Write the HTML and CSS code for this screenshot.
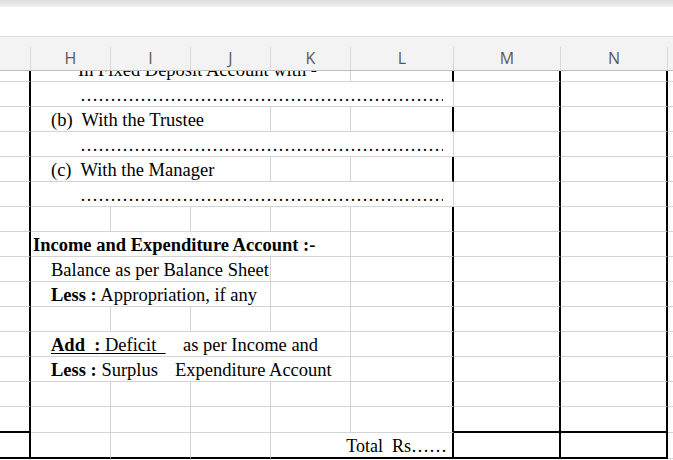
FILE: index.html
```html
<!DOCTYPE html>
<html lang="en">

<head>
    <meta charset="UTF-8">
    <meta name="viewport" content="width=device-width, initial-scale=1.0">
    <title>Receipts and Payments</title>
    <link rel="stylesheet" href="styles.css">
</head>

<body>
    <!-- Toolbar + formula bar -->
    <div class="topbar"></div>
    <div class="formula"></div>

    <!-- Column headers -->
    <div class="colhead">
        <div class="hd c-stub"></div>
        <div class="hd c-col">H</div>
        <div class="hd c-col">I</div>
        <div class="hd c-col">J</div>
        <div class="hd c-col">K</div>
        <div class="hd c-l">L</div>
        <div class="hd c-m">M</div>
        <div class="hd c-n">N</div>
        <div class="hd c-o"></div>
    </div>

    <!-- Sheet -->
    <div class="sheet">
        <div class="rows">
            <div class="row">
                <div class="cell c-stub"></div>
                <div class="cell span-4 ind-c">In Fixed Deposit Account with <b>-</b></div>
                <div class="cell c-l"></div>
                <div class="cell c-m"></div>
                <div class="cell c-n"></div>
                <div class="cell c-o"></div>
            </div>
            <div class="row">
                <div class="cell c-stub"></div>
                <div class="cell span-5 ind-d"><div class="dots">……………………………………………………………………………………</div></div>
                <div class="cell c-m"></div>
                <div class="cell c-n"></div>
                <div class="cell c-o"></div>
            </div>
            <div class="row">
                <div class="cell c-stub"></div>
                <div class="cell span-3 ind-b">(b)&nbsp; With the Trustee</div>
                <div class="cell c-col"></div>
                <div class="cell c-l"></div>
                <div class="cell c-m"></div>
                <div class="cell c-n"></div>
                <div class="cell c-o"></div>
            </div>
            <div class="row">
                <div class="cell c-stub"></div>
                <div class="cell span-5 ind-d"><div class="dots">……………………………………………………………………………………</div></div>
                <div class="cell c-m"></div>
                <div class="cell c-n"></div>
                <div class="cell c-o"></div>
            </div>
            <div class="row">
                <div class="cell c-stub"></div>
                <div class="cell span-3 ind-b">(c)&nbsp; With the Manager</div>
                <div class="cell c-col"></div>
                <div class="cell c-l"></div>
                <div class="cell c-m"></div>
                <div class="cell c-n"></div>
                <div class="cell c-o"></div>
            </div>
            <div class="row">
                <div class="cell c-stub"></div>
                <div class="cell span-5 ind-d"><div class="dots">……………………………………………………………………………………</div></div>
                <div class="cell c-m"></div>
                <div class="cell c-n"></div>
                <div class="cell c-o"></div>
            </div>
            <div class="row">
                <div class="cell c-stub"></div>
                <div class="cell c-col"></div>
                <div class="cell c-col"></div>
                <div class="cell c-col"></div>
                <div class="cell c-col"></div>
                <div class="cell c-l"></div>
                <div class="cell c-m"></div>
                <div class="cell c-n"></div>
                <div class="cell c-o"></div>
            </div>
            <div class="row">
                <div class="cell c-stub"></div>
                <div class="cell span-4 ind-a"><b>Income and Expenditure Account :-</b></div>
                <div class="cell c-l"></div>
                <div class="cell c-m"></div>
                <div class="cell c-n"></div>
                <div class="cell c-o"></div>
            </div>
            <div class="row">
                <div class="cell c-stub"></div>
                <div class="cell span-3 ind-b">Balance as per Balance Sheet</div>
                <div class="cell c-col"></div>
                <div class="cell c-l"></div>
                <div class="cell c-m"></div>
                <div class="cell c-n"></div>
                <div class="cell c-o"></div>
            </div>
            <div class="row">
                <div class="cell c-stub"></div>
                <div class="cell span-3 ind-b"><b>Less :</b> Appropriation, if any</div>
                <div class="cell c-col"></div>
                <div class="cell c-l"></div>
                <div class="cell c-m"></div>
                <div class="cell c-n"></div>
                <div class="cell c-o"></div>
            </div>
            <div class="row">
                <div class="cell c-stub"></div>
                <div class="cell c-col"></div>
                <div class="cell c-col"></div>
                <div class="cell c-col"></div>
                <div class="cell c-col"></div>
                <div class="cell c-l"></div>
                <div class="cell c-m"></div>
                <div class="cell c-n"></div>
                <div class="cell c-o"></div>
            </div>
            <div class="row">
                <div class="cell c-stub"></div>
                <div class="cell span-4 ind-b"><span class="lbl lbl-add"><span class="ul"><b>Add&nbsp; :</b> Deficit&nbsp;&nbsp;</span></span>as per Income and</div>
                <div class="cell c-l"></div>
                <div class="cell c-m"></div>
                <div class="cell c-n"></div>
                <div class="cell c-o"></div>
            </div>
            <div class="row">
                <div class="cell c-stub"></div>
                <div class="cell span-4 ind-b"><span class="lbl lbl-less"><b>Less :</b> Surplus</span>Expenditure Account</div>
                <div class="cell c-l"></div>
                <div class="cell c-m"></div>
                <div class="cell c-n"></div>
                <div class="cell c-o"></div>
            </div>
            <div class="row">
                <div class="cell c-stub"></div>
                <div class="cell c-col"></div>
                <div class="cell c-col"></div>
                <div class="cell c-col"></div>
                <div class="cell c-col"></div>
                <div class="cell c-l"></div>
                <div class="cell c-m"></div>
                <div class="cell c-n"></div>
                <div class="cell c-o"></div>
            </div>
            <div class="row tall edge">
                <div class="cell c-stub"></div>
                <div class="cell c-col"></div>
                <div class="cell c-col"></div>
                <div class="cell c-col"></div>
                <div class="cell c-col"></div>
                <div class="cell c-l"></div>
                <div class="cell c-m"></div>
                <div class="cell c-n"></div>
                <div class="cell c-o"></div>
            </div>
            <div class="row tall foot">
                <div class="cell c-stub"></div>
                <div class="cell c-col"></div>
                <div class="cell c-col"></div>
                <div class="cell c-col"></div>
                <div class="cell span-kl">Total&nbsp; Rs……</div>
                <div class="cell c-m"></div>
                <div class="cell c-n"></div>
                <div class="cell c-o"></div>
            </div>
        </div>
    </div>
</body>

</html>
```

FILE: styles.css
```css
/* Page */
* {
    margin: 0;
    padding: 0;
    box-sizing: border-box;
}

body {
    width: 673px;
    height: 460px;
    overflow: hidden;
    background: #fff;
    font-family: "Liberation Serif", "Times New Roman", serif;
    color: #000;
}

/* Top bars */
.topbar {
    height: 7px;
    background: linear-gradient(#dcdcdc, #f1f1f1);
}

.formula {
    height: 29px;
    background: #fff;
}

/* Column headers */
.colhead {
    display: flex;
    align-items: flex-end;
    height: 35px;
    background: #f3f3f3;
    border-top: 1px solid #dcdcdc;
    border-bottom: 1px solid #bdbdbd;
}

.hd {
    flex: none;
    height: 23px;
    border-right: 1px solid #d9d9d9;
    text-align: center;
    font-family: "Open Sans", "Liberation Sans", sans-serif;
    font-size: 16px;
    line-height: 22px;
    color: #595959;
}

/* Grid */
.sheet {
    height: 389px;
    overflow: hidden;
}

.rows {
    margin-top: -14px;
}

.row {
    display: flex;
    height: 25px;
}

.row.tall {
    height: 26px;
}

.cell {
    flex: none;
    height: 100%;
    border-right: 1px solid #d4d4d4;
    border-bottom: 1px solid #d4d4d4;
    padding-top: 2px;
    font-size: 18.5px;
    line-height: 22px;
    white-space: nowrap;
}

/* Column widths */
.c-stub {
    width: 31px;
    border-right: 2px solid #000;
}

.c-col {
    width: 80px;
}

.c-l {
    width: 103px;
    border-right: 2px solid #000;
}

.c-m,
.c-n {
    width: 107px;
    border-right: 2px solid #000;
}

.hd.c-stub,
.hd.c-l,
.hd.c-m,
.hd.c-n {
    border-right: 1px solid #d9d9d9;
}

.c-o {
    flex: 1;
    border-right: none;
}

.hd.c-o {
    border-right: none;
}

/* Merged cells */
.span-3 {
    width: 240px;
}

.span-4 {
    width: 320px;
}

.span-5 {
    width: 423px;
}

.span-kl {
    width: 183px;
    border-right: 2px solid #000;
    text-align: right;
    padding-right: 5px;
    font-size: 18px;
}

/* Indents */
.ind-a {
    padding-left: 2px;
}

.ind-b {
    padding-left: 20px;
}

.ind-c {
    padding-left: 47px;
}

.ind-d {
    padding-left: 49px;
}

.dots {
    width: 363px;
    overflow: hidden;
    font-size: 18px;
}

.lbl {
    display: inline-block;
}

.lbl-add {
    width: 132px;
}

.lbl-less {
    width: 124px;
}

.ul {
    text-decoration: underline;
    text-decoration-thickness: 1px;
    text-underline-offset: 2px;
}

/* Thick borders */
.row.edge .c-stub,
.row.edge .c-m,
.row.edge .c-n {
    border-bottom: 2px solid #000;
}

.row.foot .cell {
    border-bottom: 2px solid #000;
}

.row.foot .c-o {
    border-bottom: 1px solid #d4d4d4;
}
```
